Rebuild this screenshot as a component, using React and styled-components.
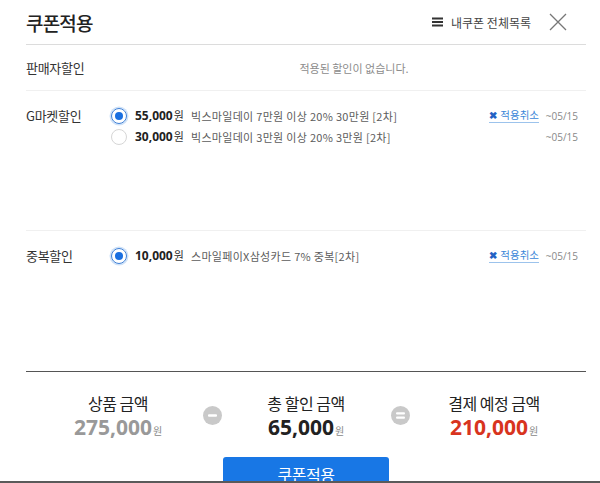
import styled, {createGlobalStyle} from "styled-components";

const GlobalStyle = createGlobalStyle`
  html, body {
    margin: 0;
    padding: 0;
    background: #fff;
  }
  body {
    font-family: "Noto Sans CJK KR", "Noto Sans", sans-serif;
    color: #333;
  }
`;

const Page = styled.div`
  width: 600px;
  height: 483px;
  overflow: hidden;
  position: relative;
  box-sizing: border-box;
  padding: 0 14px 0 26px;
  border-bottom: 2px solid #5a5a5a;
`;

const Header = styled.div`
  display: flex;
  align-items: center;
  height: 44px;
  border-bottom: 1px solid #dcdcdc;
`;

const Title = styled.h1`
  margin: 0;
  font-size: 19px;
  font-weight: 500;
  color: #222;
  letter-spacing: -0.8px;
  flex: 1;
`;

const MyCoupons = styled.a`
  display: flex;
  align-items: center;
  gap: 8px;
  font-size: 12px;
  color: #444;
  margin-right: 18px;
`;

const CloseButton = styled.button`
  border: 0;
  background: none;
  padding: 0;
  width: 18px;
  height: 18px;
  margin-right: 19px;
  display: flex;
`;

const Section = styled.div`
  display: flex;
  align-items: ${p => (p.$center ? "center" : "flex-start")};
  height: ${p => p.$height}px;
  box-sizing: border-box;
  padding-top: ${p => p.$padTop || 0}px;
  border-bottom: 1px solid ${p => p.$strong ? "#555" : "#f0f0f0"};
`;

const Label = styled.div`
  width: 84px;
  flex-shrink: 0;
  font-size: 13px;
  color: #333;
  letter-spacing: -0.3px;
  line-height: 21px;
`;

const Empty = styled.div`
  flex: 1;
  text-align: center;
  font-size: 11px;
  color: #8c8c8c;
  padding-left: 12px;
`;

const Coupons = styled.div`
  flex: 1;
  display: flex;
  flex-direction: column;
`;

const CouponRow = styled.div`
  display: flex;
  align-items: center;
  height: 21px;
`;

const Radio = styled.span`
  width: 16px;
  height: 16px;
  border-radius: 50%;
  box-sizing: border-box;
  flex-shrink: 0;
  border: 1px solid ${p => (p.$checked ? "#3d7fd6" : "#d6d6d6")};
  box-shadow: ${p => (p.$checked ? "0 0 0 1.5px #cfe2f8" : "none")};
  display: flex;
  align-items: center;
  justify-content: center;
  margin: 0 8px 0 1px;

  &::after {
    content: "";
    display: ${p => (p.$checked ? "block" : "none")};
    width: 8px;
    height: 8px;
    border-radius: 50%;
    background: #1a6fe0;
  }
`;

const Amount = styled.div`
  width: 56px;
  flex-shrink: 0;
  font-family: "Open Sans", "Noto Sans", sans-serif;
  font-size: 12px;
  font-weight: 700;
  color: #222;

  span {
    font-family: "Noto Sans CJK KR", sans-serif;
    font-weight: 400;
    font-size: 11px;
    color: #333;
    margin-left: 1px;
  }
`;

const Desc = styled.div`
  flex: 1;
  font-size: 11px;
  color: #5c5c5c;
  letter-spacing: 0.3px;
`;

const Cancel = styled.a`
  font-size: 10.5px;
  color: #3a86d8;
  border-bottom: 1px solid #9cc3ec;
  line-height: 14px;
  margin-right: 6px;
  display: flex;
  align-items: center;
  gap: 3px;

  b {
    color: #2462c4;
    font-size: 10px;
  }
`;

const Until = styled.div`
  font-size: 10px;
  color: #888;
  width: 33px;
  text-align: right;
  margin-right: 8px;
  font-family: "Open Sans", sans-serif;
`;

const Summary = styled.div`
  display: flex;
  justify-content: center;
  align-items: center;
  padding-top: 21px;
`;

const Column = styled.div`
  width: 150px;
  display: flex;
  flex-direction: column;
  align-items: center;
`;

const ColLabel = styled.div`
  font-size: 16px;
  color: #222;
  line-height: 20px;
  letter-spacing: -0.5px;
`;

const Total = styled.div`
  font-family: "Open Sans", "Noto Sans", sans-serif;
  font-weight: 700;
  font-size: 21px;
  line-height: 24px;
  margin-top: 2px;
  color: ${p => p.$color};

  span {
    font-family: "Noto Sans CJK KR", sans-serif;
    font-weight: 400;
    font-size: 10px;
    color: #888;
    margin-left: 1px;
  }
`;

const Operator = styled.div`
  width: 38px;
  display: flex;
  justify-content: center;
  margin-bottom: 6px;
`;

const Footer = styled.div`
  display: flex;
  justify-content: center;
  margin-top: 14px;
`;

const ApplyButton = styled.button`
  width: 166px;
  height: 40px;
  border: 0;
  border-radius: 3px 3px 0 0;
  background: #1877e5;
  color: #fff;
  font-family: "Noto Sans CJK KR", sans-serif;
  font-size: 16px;
  padding: 0 0 6px;
  letter-spacing: -0.5px;
`;

const MenuIcon = () => (
  <svg width="11" height="10" viewBox="0 0 11 10">
    <rect x="0" y="0.5" width="11" height="2" fill="#333"/>
    <rect x="0" y="4" width="11" height="2" fill="#333"/>
    <rect x="0" y="7.5" width="11" height="2" fill="#333"/>
  </svg>
);

const CloseIcon = () => (
  <svg width="18" height="18" viewBox="0 0 18 18">
    <path d="M1 1 L17 17 M17 1 L1 17" stroke="#777" strokeWidth="1.3" fill="none"/>
  </svg>
);

const OpIcon = ({type}) => (
  <svg width="19" height="19" viewBox="0 0 19 19">
    <circle cx="9.5" cy="9.5" r="9.5" fill="#c9c9c9"/>
    {type === "minus" ? (
      <rect x="5" y="8.3" width="9" height="2.4" rx="1" fill="#fff"/>
    ) : (
      <>
        <rect x="5" y="6.3" width="9" height="2.2" rx="1" fill="#fff"/>
        <rect x="5" y="10.5" width="9" height="2.2" rx="1" fill="#fff"/>
      </>
    )}
  </svg>
);

const Coupon = ({checked, amount, desc, cancel}) => (
  <CouponRow>
    <Radio $checked={checked}/>
    <Amount>{amount}<span>원</span></Amount>
    <Desc>{desc}</Desc>
    {cancel && <Cancel><b>✖</b>적용취소</Cancel>}
    <Until>~05/15</Until>
  </CouponRow>
);

const App = () => {
  return (
    <Page>
      <GlobalStyle/>
      <Header>
        <Title>쿠폰적용</Title>
        <MyCoupons><MenuIcon/>내쿠폰 전체목록</MyCoupons>
        <CloseButton><CloseIcon/></CloseButton>
      </Header>

      <Section $height={46} $center>
        <Label>판매자할인</Label>
        <Empty>적용된 할인이 없습니다.</Empty>
      </Section>

      <Section $height={140} $padTop={14}>
        <Label>G마켓할인</Label>
        <Coupons>
          <Coupon checked amount="55,000" desc="빅스마일데이 7만원 이상 20% 30만원 [2차]" cancel/>
          <Coupon amount="30,000" desc="빅스마일데이 3만원 이상 20% 3만원 [2차]"/>
        </Coupons>
      </Section>

      <Section $height={141} $padTop={14} $strong>
        <Label>중복할인</Label>
        <Coupons>
          <Coupon checked amount="10,000" desc="스마일페이X삼성카드 7% 중복[2차]" cancel/>
        </Coupons>
      </Section>

      <Summary>
        <Column>
          <ColLabel>상품 금액</ColLabel>
          <Total $color="#999">275,000<span>원</span></Total>
        </Column>
        <Operator><OpIcon type="minus"/></Operator>
        <Column>
          <ColLabel>총 할인 금액</ColLabel>
          <Total $color="#222">65,000<span>원</span></Total>
        </Column>
        <Operator><OpIcon type="equals"/></Operator>
        <Column>
          <ColLabel>결제 예정 금액</ColLabel>
          <Total $color="#d8341e">210,000<span>원</span></Total>
        </Column>
      </Summary>

      <Footer>
        <ApplyButton>쿠폰적용</ApplyButton>
      </Footer>
    </Page>
  );
};

export default App;
